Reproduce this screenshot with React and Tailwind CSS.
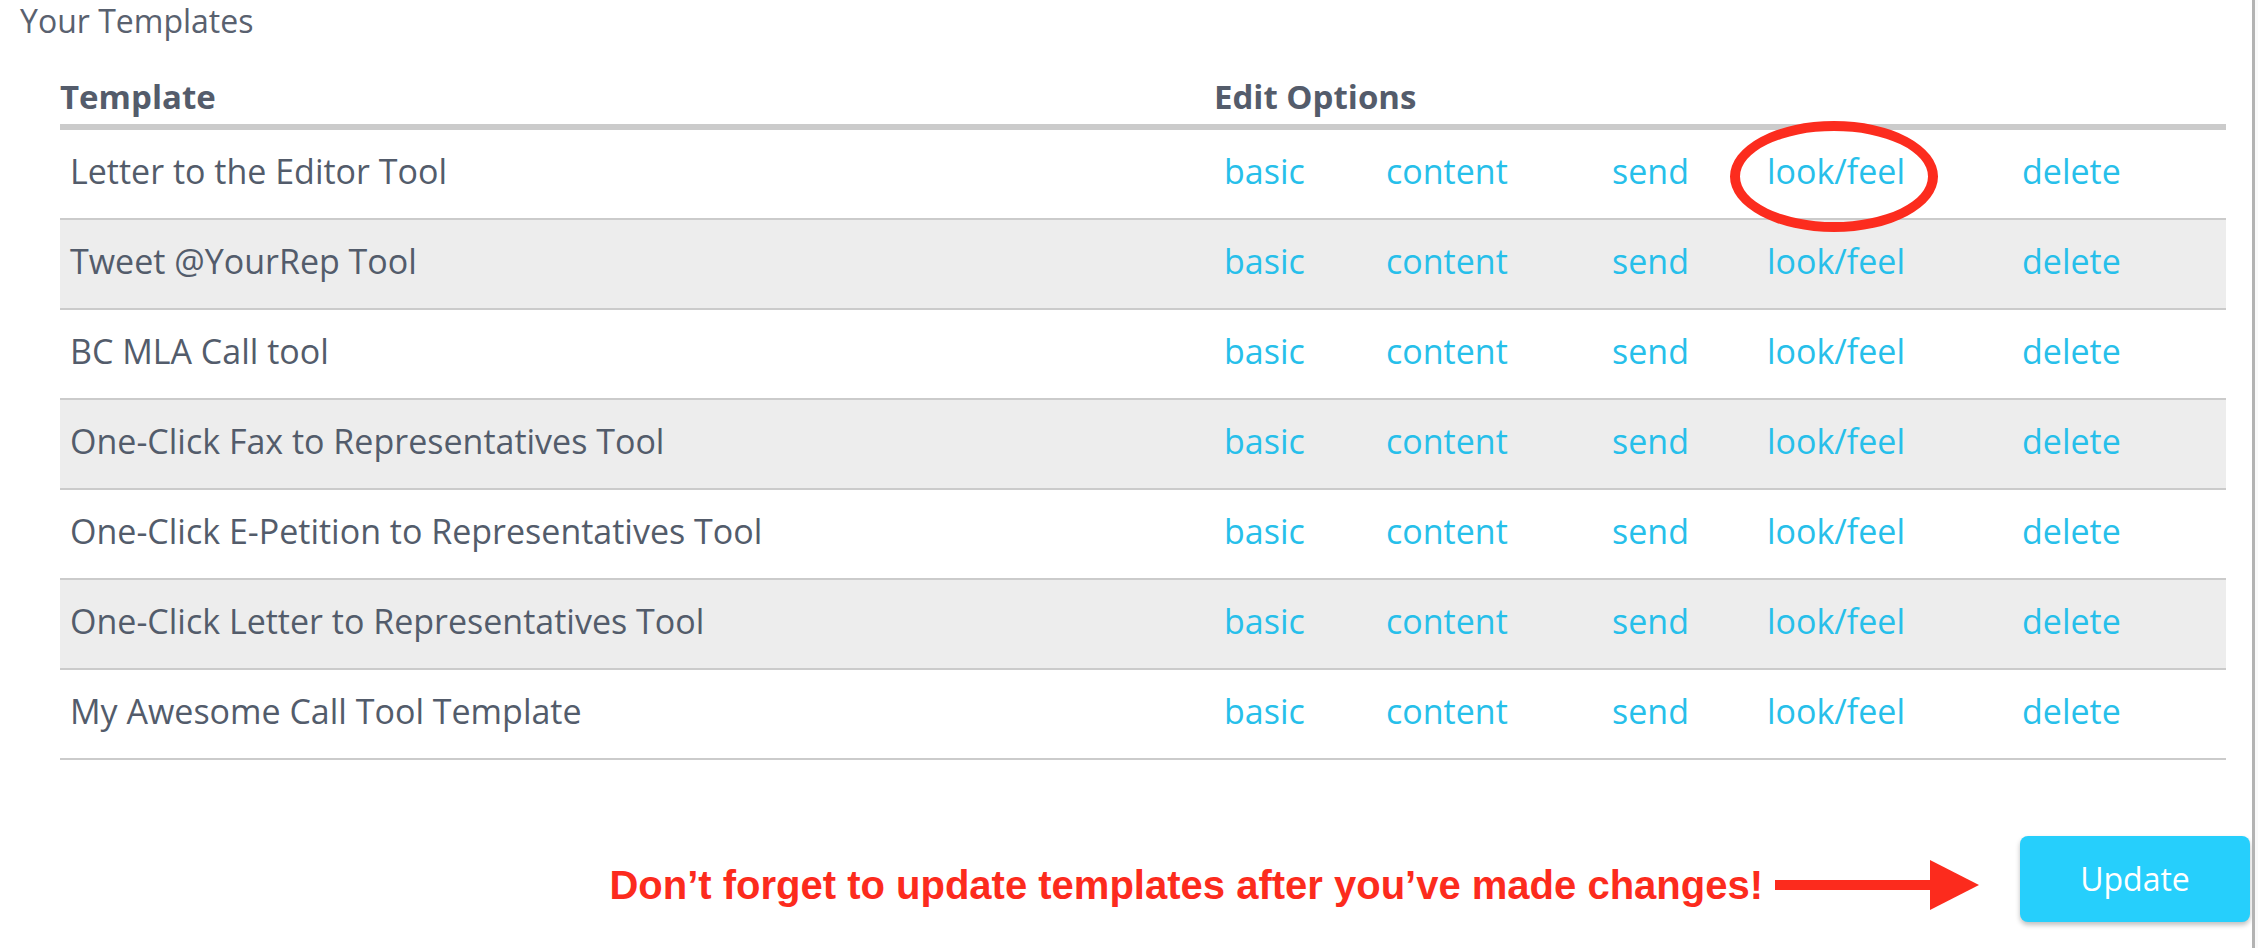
const templates = [
  "Letter to the Editor Tool",
  "Tweet @YourRep Tool",
  "BC MLA Call tool",
  "One-Click Fax to Representatives Tool",
  "One-Click E-Petition to Representatives Tool",
  "One-Click Letter to Representatives Tool",
  "My Awesome Call Tool Template",
];

const options = ["basic", "content", "send", "look/feel", "delete"];

const App = () => {
  return (
    <div
      className="flex h-[948px] w-[2258px] overflow-hidden bg-white text-[#535c6b]"
      style={{ fontFamily: '"Open Sans", sans-serif' }}
    >
      <div className="w-[2252px] shrink-0">
        <div className="h-[42px] pl-[20px] text-[32px] leading-[42px] text-[#59616f]">
          Your Templates
        </div>

        <div className="ml-[60px] mr-[26px]">
          {/* header */}
          <div className="grid h-[88px] grid-cols-[1154px_1fr] border-b-[6px] border-[#cbcbcb]">
            <div className="flex items-end pb-[7px] text-[33px] font-bold leading-[40px] text-[#545c6b]">
              Template
            </div>
            <div className="flex items-end pb-[7px] text-[33px] font-bold leading-[40px] text-[#545c6b]">
              Edit Options
            </div>
          </div>

          {templates.map((name, i) => (
            <div
              key={name}
              className={`grid h-[90px] grid-cols-[1154px_162px_226px_155px_255px_214px] border-b-2 border-[#cbcbcb] text-[34px] leading-[40px] ${
                i % 2 === 1 ? "bg-[#ededed]" : "bg-white"
              }`}
            >
              <div className="flex items-center pb-[6px] pl-[10px]">{name}</div>
              {options.map((opt) => (
                <div
                  key={opt}
                  className="relative flex items-center pb-[6px] pl-[10px] text-[#27bfea]"
                >
                  {opt}
                  {i === 0 && opt === "look/feel" && (
                    <div className="absolute left-[-27px] top-[-9px] h-[111px] w-[208px] rounded-[50%] border-[10px] border-[#fc2c1e]"></div>
                  )}
                </div>
              ))}
            </div>
          ))}
        </div>

        {/* footer */}
        <div className="mr-[2px] mt-[76px] flex items-center justify-end">
          <div className="flex items-center pt-[11px]">
            <span
              className="text-[40px] font-bold leading-[40px] text-[#fc2b1d]"
              style={{ fontFamily: '"Liberation Sans", Arial, sans-serif' }}
            >
              Don’t forget to update templates after you’ve made changes!
            </span>
            <svg
              width="204"
              height="50"
              viewBox="0 0 204 50"
              className="ml-[12px]"
            >
              <rect x="0" y="20" width="158" height="10" fill="#fc2b1d" />
              <polygon points="155,0 204,25 155,50" fill="#fc2b1d" />
            </svg>
          </div>
          <button className="ml-[41px] h-[86px] w-[230px] rounded-[8px] bg-[#26cffc] text-[32px] text-white shadow-[0_3px_5px_rgba(0,0,0,0.25)]">
            Update
          </button>
        </div>
      </div>
      <div className="w-[3px] shrink-0 bg-[#b3b3b3]"></div>
      <div className="flex-1 bg-[#fafafa]"></div>
    </div>
  );
};

export default App;
